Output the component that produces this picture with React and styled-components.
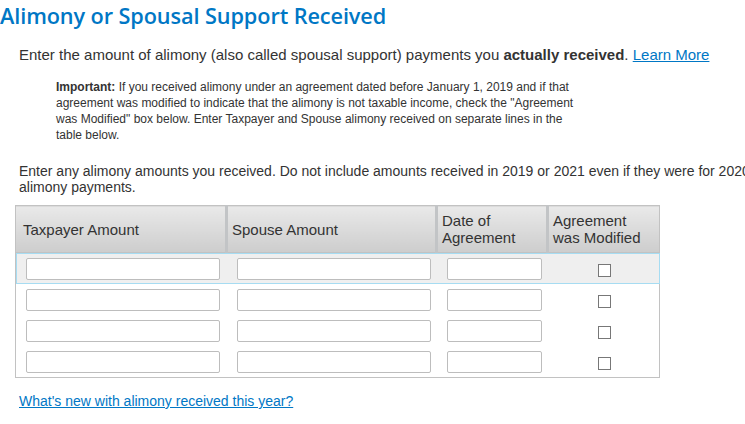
import React from 'react';
import styled, { createGlobalStyle } from 'styled-components';

const GlobalStyle = createGlobalStyle`
	html, body {
		margin: 0;
		padding: 0;
		background: #fff;
		overflow: hidden;
	}
	body {
		font-family: 'Liberation Sans', Arial, sans-serif;
		color: #333;
	}
`;

const Page = styled.div`
	width: 780px;
	padding-top: 3px;
`;

const Title = styled.h1`
	margin: 0;
	font-family: 'Open Sans', 'Liberation Sans', sans-serif;
	font-weight: 600;
	font-size: 21.7px;
	line-height: 26px;
	color: #0077c5;
	letter-spacing: -0.1px;
`;

const Body = styled.div`
	padding-left: 19px;
`;

const Lead = styled.p`
	margin: 17px 0 0;
	font-size: 15px;
	line-height: 18px;
`;

const Link = styled.a`
	color: #0077c5;
	text-decoration: underline;
	cursor: pointer;
`;

const Note = styled.p`
	margin: 15px 0 0 37px;
	width: 530px;
	font-size: 12px;
	line-height: 16px;
`;

const Intro = styled.p`
	margin: 20px 0 0;
	width: 740px;
	font-size: 14px;
	line-height: 16px;
`;

const Grid = styled.table`
	margin: 10px 0 0 -4px;
	width: 644px;
	border-collapse: collapse;
	border: 1px solid #c2c2c2;
	table-layout: fixed;
`;

const HeadCell = styled.th`
	height: 46px;
	padding: 0 4px;
	text-align: left;
	font-weight: normal;
	font-size: 15px;
	line-height: 17px;
	color: #333;
	background: linear-gradient(#e9e9e9, #cdcdcd);
	border-left: 3px solid #c2c4c6;
	border-bottom: 1px solid #c2c2c2;
	&:first-child {
		border-left: none;
		padding-left: 7px;
	}
`;

const Row = styled.tr`
	background: ${p => (p.$active ? '#efefef' : '#fff')};
	outline: ${p => (p.$active ? '1px solid #a6dcf2' : 'none')};
	outline-offset: -1px;
`;

const Cell = styled.td`
	height: 31px;
	padding: 0 0 0 10px;
	text-align: ${p => (p.$center ? 'center' : 'left')};
	vertical-align: middle;
	&:last-child {
		padding-left: 0;
	}
`;

const Field = styled.input`
	display: block;
	box-sizing: border-box;
	width: ${p => p.$w}px;
	height: 22px;
	border: 1px solid #bdbdbd;
	border-radius: 2px;
	background: #fff;
	margin: 0;
	padding: 2px 4px;
	font-size: 14px;
`;

const Check = styled.input.attrs({ type: 'checkbox' })`
	appearance: none;
	width: 13px;
	height: 13px;
	margin: 3px 0 0 3px;
	border: 1px solid #777;
	background: #fff;
	vertical-align: middle;
`;

const Footer = styled.p`
	margin: 15px 0 0;
	font-size: 14px;
	line-height: 16px;
`;

const rows = [0, 1, 2, 3];

export default function App() {
	return (
		<Page>
			<GlobalStyle />
			<Title>Alimony or Spousal Support Received</Title>
			<Body>
				<Lead>
					Enter the amount of alimony (also called spousal support) payments you{' '}
					<b>actually received</b>. <Link>Learn More</Link>
				</Lead>
				<Note>
					<b>Important:</b> If you received alimony under an agreement dated before January 1, 2019
					and if that agreement was modified to indicate that the alimony is not taxable income,
					check the "Agreement was Modified" box below. Enter Taxpayer and Spouse alimony received
					on separate lines in the table below.
				</Note>
				<Intro>
					Enter any alimony amounts you received. Do not include amounts received in 2019 or 2021
					even if they were for 2020 alimony payments.
				</Intro>
				<Grid>
					<colgroup>
						<col style={{ width: 211 }} />
						<col style={{ width: 210 }} />
						<col style={{ width: 111 }} />
						<col style={{ width: 112 }} />
					</colgroup>
					<thead>
						<tr>
							<HeadCell>Taxpayer Amount</HeadCell>
							<HeadCell>Spouse Amount</HeadCell>
							<HeadCell>Date of<br />Agreement</HeadCell>
							<HeadCell>Agreement<br />was Modified</HeadCell>
						</tr>
					</thead>
					<tbody>
						{rows.map(i => (
							<Row key={i} $active={i === 0}>
								<Cell><Field $w={194} /></Cell>
								<Cell><Field $w={194} /></Cell>
								<Cell><Field $w={95} /></Cell>
								<Cell $center><Check /></Cell>
							</Row>
						))}
					</tbody>
				</Grid>
				<Footer>
					<Link>What's new with alimony received this year?</Link>
				</Footer>
			</Body>
		</Page>
	);
}
